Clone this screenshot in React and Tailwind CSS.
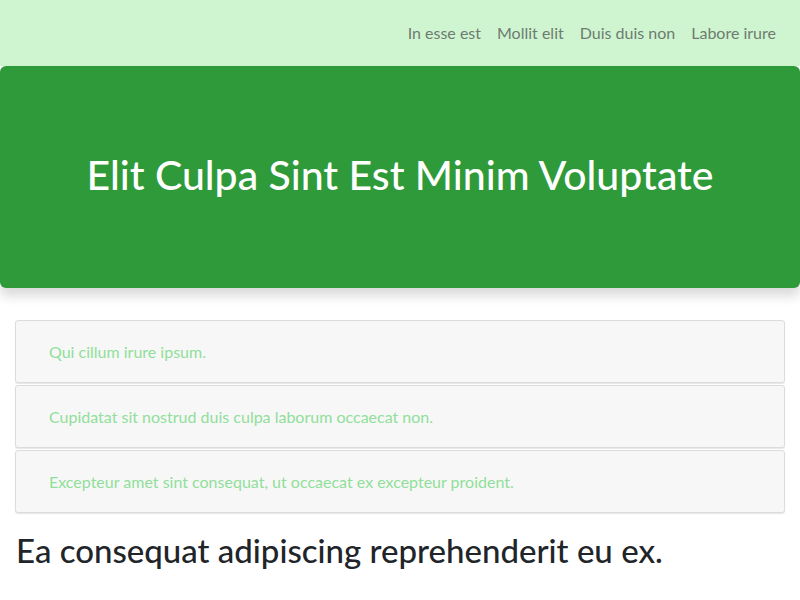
export default function App() {
    const links = ['In esse est', 'Mollit elit', 'Duis duis non', 'Labore irure'];
    const items = [
        'Qui cillum irure ipsum.',
        'Cupidatat sit nostrud duis culpa laborum occaecat non.',
        'Excepteur amet sint consequat, ut occaecat ex excepteur proident.',
    ];

    return (
        <div className="min-h-screen bg-white font-['Lato','Liberation_Sans',sans-serif]">
            {/* Navbar */}
            <nav className="h-[66px] bg-[#cef5d0] flex items-center justify-end pr-6 gap-4">
                {links.map((l) => (
                    <a key={l} href="#" className="text-[16px] text-[#6f7b70]">
                        {l}
                    </a>
                ))}
            </nav>

            {/* Hero */}
            <header className="h-[222px] bg-[#2f9a39] rounded-md shadow-[0_8px_12px_rgba(0,0,0,0.15)] flex items-center justify-center">
                <h1 className="text-[41px] font-medium text-white -mt-1">Elit Culpa Sint Est Minim Voluptate</h1>
            </header>

            <main className="px-[15px] pt-8">
                <ul className="flex flex-col gap-[2px]">
                    {items.map((t) => (
                        <li
                            key={t}
                            className="h-[63px] flex items-center pl-[33px] bg-[#f7f7f7] border border-[#dcdcdc] rounded-[3px] shadow-[0_1px_1px_rgba(0,0,0,0.1)] text-[16px] text-[#90df9a]"
                        >
                            {t}
                        </li>
                    ))}
                </ul>
                <h2 className="mt-[13px] pl-[1px] text-[33px] font-medium text-[#212529]">
                    Ea consequat adipiscing reprehenderit eu ex.
                </h2>
            </main>
        </div>
    );
}
